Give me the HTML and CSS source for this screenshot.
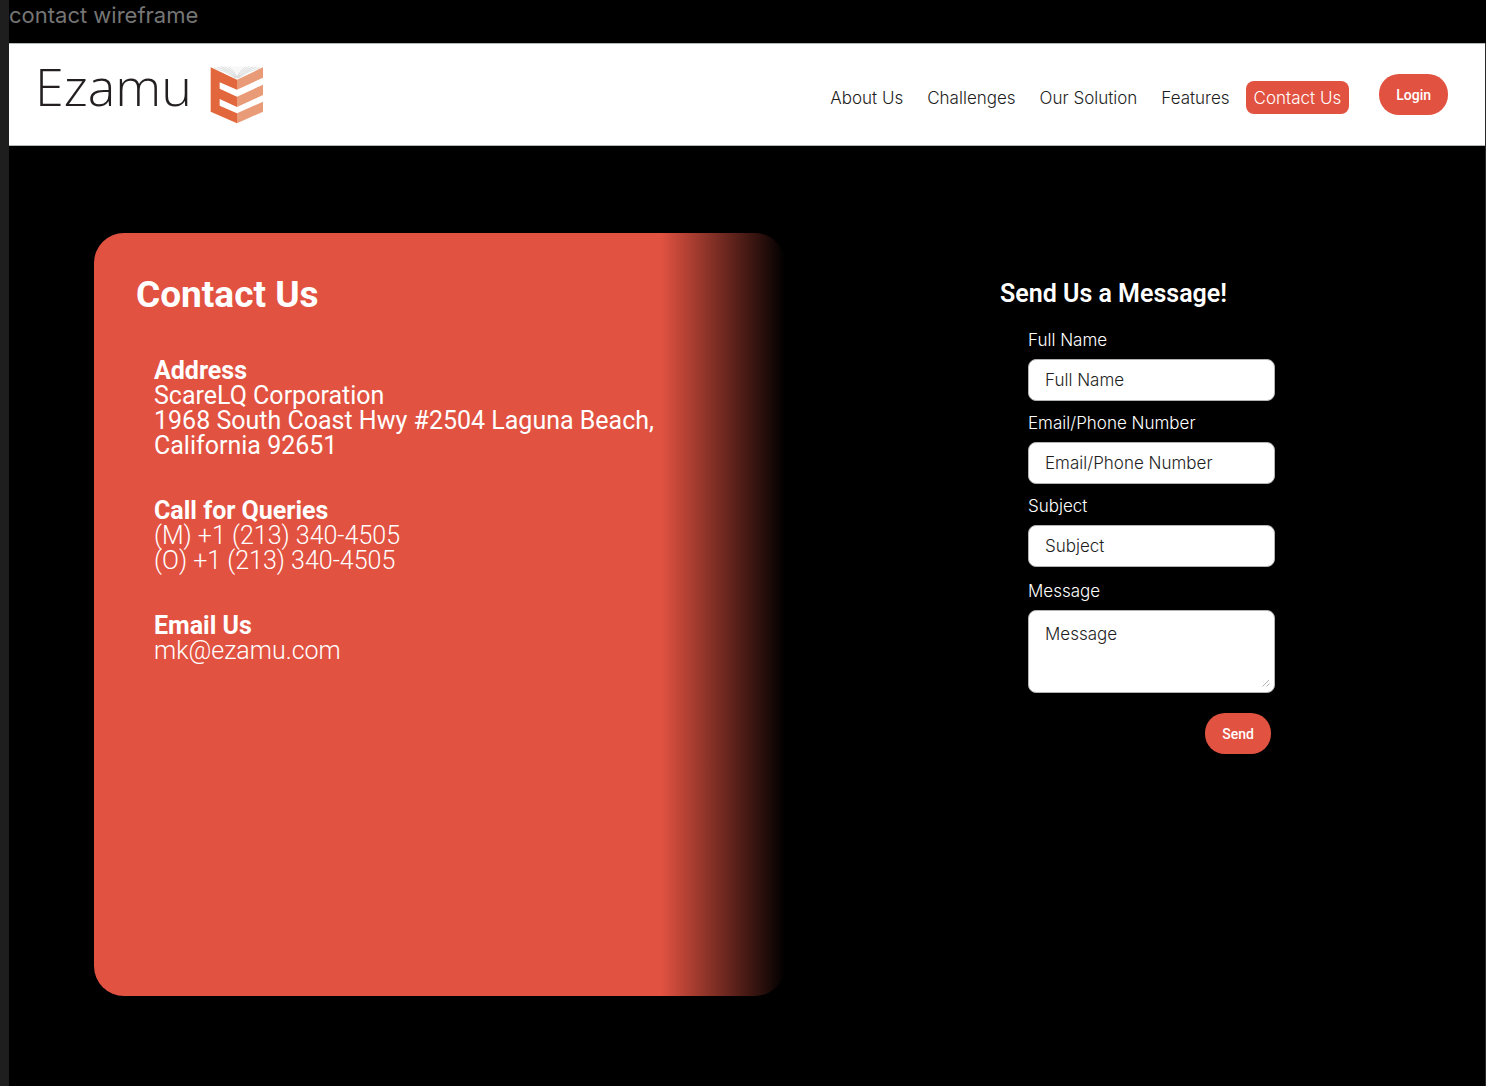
FILE: index.html
```html
<!DOCTYPE html>
<html lang="en">
<head>
<meta charset="utf-8">
<meta name="viewport" content="width=device-width, initial-scale=1">
<title>Ezamu – Contact Us</title>
<link rel="stylesheet" href="styles.css">
</head>
<body>
<div class="canvas">
  <p class="frame-label">contact wireframe</p>
  <div class="frame">
    <header class="header">
      <a class="logo" href="#">
        <span class="logo-text">Ezamu</span>
        <svg class="logo-mark" viewBox="0 0 162 174" aria-hidden="true">
          <path fill="#f8f8f8" d="M20 2 81 38 142 2Z"/>
          <g fill="none" stroke="#c4c6c8" stroke-width="1.500">
            <path d="M12 5Q50 16 78 37M22 3Q58 16 79 36M33 2Q62 14 80 35M44 2Q68 14 80 34M55 2Q74 16 81 33"/>
            <path d="M150 5Q112 16 84 37M140 3Q104 16 83 36M129 2Q100 14 82 35M118 2Q94 14 82 34M107 2Q88 16 81 33"/>
          </g>
          <path fill="#e2673c" d="M2 4 81 41V71L29 49V68L81 92V123L29 99V119L81 142V172L2 137Z"/>
          <path fill="#e99b78" d="M81 41 159 4V35L81 71ZM81 92 159 56V87L81 123ZM81 142 159 107V137L81 172Z"/>
        </svg>
      </a>
      <nav class="nav" aria-label="Main">
        <a href="#">About Us</a>
        <a href="#">Challenges</a>
        <a href="#">Our Solution</a>
        <a href="#">Features</a>
        <a class="active" href="#" aria-current="page">Contact Us</a>
      </nav>
      <button class="button" type="button">Login</button>
    </header>
    <main class="main">
      <section class="card">
        <h1>Contact Us</h1>
        <div class="details">
          <div>
            <h2>Address</h2>
            <p>ScareLQ Corporation</p>
            <p>1968 South Coast Hwy #2504 Laguna Beach,<br>California 92651</p>
          </div>
          <div class="light">
            <h2>Call for Queries</h2>
            <p>(M) +1 (213) 340-4505</p>
            <p>(O) +1 (213) 340-4505</p>
          </div>
          <div class="light">
            <h2>Email Us</h2>
            <p>mk@ezamu.com</p>
          </div>
        </div>
      </section>
      <section class="message">
        <h2>Send Us a Message!</h2>
        <form class="form">
          <div class="field">
            <label for="name">Full Name</label>
            <input id="name" type="text" placeholder="Full Name">
          </div>
          <div class="field">
            <label for="contact">Email/Phone Number</label>
            <input id="contact" type="text" placeholder="Email/Phone Number">
          </div>
          <div class="field">
            <label for="subject">Subject</label>
            <input id="subject" type="text" placeholder="Subject">
          </div>
          <div class="field field-area">
            <label for="message">Message</label>
            <textarea id="message" placeholder="Message"></textarea>
            <svg class="grip" viewBox="0 0 8 8" aria-hidden="true"><path d="M.5 7.500 7 1M4.500 7.500 7.500 4.500" fill="none" stroke="#b3b3b3"/></svg>
          </div>
          <button class="button send" type="submit">Send</button>
        </form>
      </section>
    </main>
  </div>
</div>
</body>
</html>
```
FILE: styles.css
```css
* {
  box-sizing: border-box;
}

body {
  margin: 0;
  background: #000;
  color: #fff;
  font-family: Inter, sans-serif;
}

h1, h2, p {
  margin: 0;
}

.canvas {
  display: flex;
  flex-direction: column;
  min-height: 100vh;
  border-left: 9px solid #1e1e1e;
}

.frame-label {
  height: 43px;
  color: #757575;
  font-size: 22px;
  line-height: 30px;
}

.frame {
  flex: 1;
  display: flex;
  flex-direction: column;
  border-right: 1px solid #2a2a2a;
}

.header {
  display: flex;
  align-items: center;
  height: 103px;
  padding: 0 37px 0 26px;
  border: solid #b2b8b6;
  border-width: 1px 0;
  background: #fff;
}

.logo {
  display: flex;
  align-items: center;
  gap: 18px;
  margin-right: auto;
  color: #231f20;
  text-decoration: none;
}

.logo-text {
  padding-bottom: 18px;
  font: 300 52px/60px "Open Sans", sans-serif;
}

.logo-mark {
  width: 54px;
  height: 58px;
}

.nav {
  display: flex;
  gap: 8px;
  margin: 6px 30px 0 0;
}

.nav a {
  padding: 1px 8px 0;
  border-radius: 8px;
  color: #1e1e1e;
  font-size: 17px;
  font-weight: 300;
  line-height: 32px;
  text-decoration: none;
}

.nav .active {
  background: #e25241;
  color: #fff;
}

.button {
  height: 41px;
  padding: 0 17px;
  border: 0;
  border-radius: 20px;
  background: #e25241;
  color: #fff;
  font: 500 14px/20px Roboto, sans-serif;
}

.main {
  flex: 1;
  display: grid;
  grid-template-columns: minmax(0, 1fr) 275px;
  gap: 215px;
  padding: 87px 210px 90px 85px;
}

.card {
  padding: 40px 42px;
  border-radius: 30px;
  background: linear-gradient(to right, #e25241 82%, #000);
  font-family: Roboto, sans-serif;
}

.card h1 {
  font-size: 37px;
  line-height: 44px;
}

.details {
  display: flex;
  flex-direction: column;
  gap: 40px;
  margin: 41px 0 0 18px;
  font-size: 25px;
  line-height: 25px;
}

.details h2 {
  font-size: 25px;
}

.light {
  font-weight: 300;
}

.message {
  padding-top: 46px;
}

.message h2 {
  font: 600 25px/30px Roboto, sans-serif;
}

.form {
  display: flex;
  flex-direction: column;
  gap: 10px;
  margin: 19px 0 0 28px;
}

.field {
  position: relative;
  display: flex;
  flex-direction: column;
  gap: 7px;
  font-size: 17px;
  font-weight: 300;
  line-height: 24px;
}

.field-area {
  margin-top: 2px;
}

.field input,
.field textarea {
  width: 100%;
  height: 42px;
  padding: 0 16px;
  border: 1px solid #b3b3b3;
  border-radius: 8px;
  background: #fff;
  color: #1e1e1e;
  font: inherit;
}

.field textarea {
  height: 83px;
  padding: 11px 16px;
  resize: none;
}

.field ::placeholder {
  color: #1e1e1e;
  opacity: 1;
}

.grip {
  position: absolute;
  right: 5px;
  bottom: 6px;
  width: 8px;
  height: 8px;
}

.send {
  align-self: flex-end;
  margin: 10px 4px 0 0;
}
```
